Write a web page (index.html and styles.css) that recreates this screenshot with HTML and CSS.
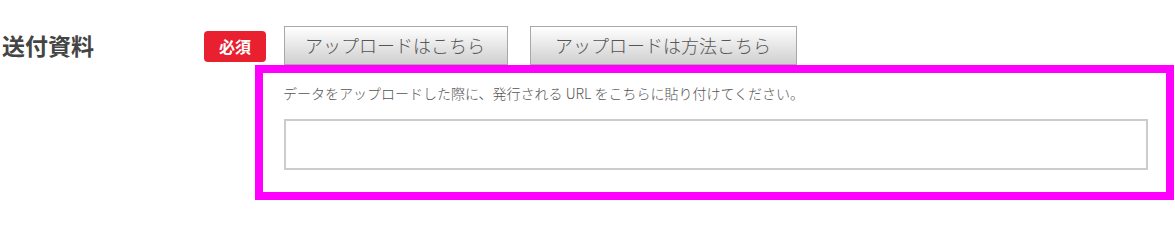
FILE: index.html
```html
<!DOCTYPE html>
<html lang="ja">
<head>
<meta charset="utf-8">
<title>送付資料</title>
<link rel="stylesheet" href="styles.css">
</head>
<body>
<div class="field">
  <div class="field-label">送付資料</div>
  <div class="field-body">
    <div class="field-head">
      <span class="badge">必須</span>
      <button class="btn" type="button">アップロードはこちら</button>
      <button class="btn btn-wide" type="button">アップロードは方法こちら</button>
    </div>
    <div class="url-box">
      <p class="url-note">データをアップロードした際に、発行される URL をこちらに貼り付けてください。</p>
      <input class="url-input" type="text">
    </div>
  </div>
</div>
</body>
</html>
```
FILE: styles.css
```css
html, body {
  margin: 0;
  padding: 0;
  background: #fff;
}
body {
  font-family: "Noto Sans CJK JP", "Noto Sans", sans-serif;
  color: #555;
}
.field {
  display: flex;
  padding-top: 26px;
}
.field-label {
  width: 202px;
  padding-left: 2px;
  margin-top: 4px;
  font-size: 23px;
  line-height: 30px;
  font-weight: bold;
  color: #444;
}
.field-body {
  display: flex;
  flex-direction: column;
}
.field-head {
  display: flex;
  align-items: flex-start;
}
.badge {
  margin-top: 5px;
  margin-right: 18px;
  height: 31px;
  width: 62px;
  box-sizing: border-box;
  line-height: 31px;
  text-align: center;
  font-size: 16px;
  font-weight: bold;
  color: #fff;
  background: #e8202f;
  border-radius: 4px;
}
.btn {
  height: 39px;
  box-sizing: border-box;
  padding: 0 22px 0 20px;
  margin-right: 22px;
  font-family: inherit;
  font-size: 18px;
  font-weight: 300;
  line-height: 37px;
  color: #555;
  border: 1px solid #a8a8a8;
  border-radius: 0;
  background: linear-gradient(#ffffff, #cfcfcf);
}
.btn-wide {
  padding: 0 25px 0 24px;
}
.url-box {
  margin-left: 51px;
  width: 919px;
  height: 135px;
  box-sizing: border-box;
  border: 8px solid #ff00ff;
  padding: 10px 18px 0 21px;
}
.url-note {
  margin: 0 0 16px -1px;
  font-size: 14px;
  font-weight: 300;
  line-height: 20px;
  color: #555;
}
.url-input {
  display: block;
  width: 100%;
  height: 51px;
  box-sizing: border-box;
  margin: 0;
  border: 2px solid #cccccc;
  background: #fff;
  outline: none;
}
```
